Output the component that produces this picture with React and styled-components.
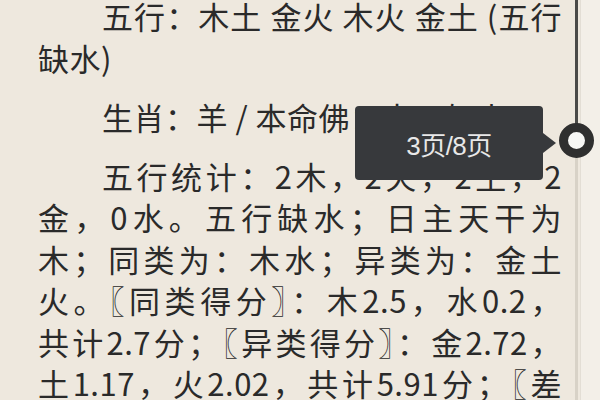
import React from "react";
import styled, { createGlobalStyle } from "styled-components";

const GlobalStyle = createGlobalStyle`
  html, body {
    margin: 0;
    padding: 0;
    background: #eee8de;
    overflow: hidden;
  }
`;

const Page = styled.div`
  position: relative;
  width: 600px;
  height: 400px;
  overflow: hidden;
  display: flex;
  background: #eee8de;
  font-family: "Noto Sans CJK SC", "Noto Sans", sans-serif;
`;

const TextColumn = styled.div`
  flex: none;
  width: 524px;
  padding-left: 38px;
  margin-top: -5px;
  color: #2a2a2a;
  font-size: 31px;
  letter-spacing: 0.5px;
  line-height: 41.5px;
`;

const Paragraph = styled.div`
  margin-bottom: 17.5px;
`;

const Line = styled.div`
  padding-left: ${(p) => (p.$indent ? "64px" : "0")};
  text-align: ${(p) => (p.$full ? "justify" : "left")};
  text-align-last: ${(p) => (p.$full ? "justify" : "left")};
`;

const Rail = styled.div`
  flex: 1;
  display: flex;
  padding-left: 13px;
`;

const RailLine = styled.div`
  flex: none;
  width: 3px;
  background: linear-gradient(
    to bottom,
    #4a4a48 0,
    #4a4a48 141px,
    #d8d2c7 141px,
    #d8d2c7 100%
  );
`;

const RailStrip = styled.div`
  flex: 1;
  margin-left: 2px;
  background: #f3efe8;
  border-left: 1px solid #e3ded5;
`;

const Knob = styled.div`
  position: absolute;
  left: 559px;
  top: 123px;
  width: 17px;
  height: 17px;
  border-radius: 50%;
  background: #f7f7f5;
  border: 9.5px solid #2f2f2f;
`;

const Tooltip = styled.div`
  position: absolute;
  left: 355px;
  top: 106px;
  width: 188px;
  height: 74px;
  border-radius: 4px;
  background: #37393c;
  color: #e8e8e8;
  display: flex;
  align-items: center;
  justify-content: center;
  font-family: "Liberation Sans", "Noto Sans CJK SC", sans-serif;
  font-size: 26px;
  letter-spacing: -0.5px;

  &::after {
    content: "";
    position: absolute;
    right: -13px;
    top: 27px;
    border-left: 13px solid #37393c;
    border-top: 10px solid transparent;
    border-bottom: 10px solid transparent;
  }
`;

const TooltipText = styled.span`
  font-family: "Liberation Sans", "Noto Sans CJK SC", sans-serif;
`;

export default function App() {
  return (
    <>
      <GlobalStyle />
      <Page>
        <TextColumn>
          <Paragraph>
            <Line $indent $full>五行：木土 金火 木火 金土 (五行</Line>
            <Line>缺水)</Line>
          </Paragraph>
          <Paragraph>
            <Line $indent>生肖：羊 / 本命佛：大日如来</Line>
          </Paragraph>
          <Paragraph>
            <Line $indent $full>五行统计：2木，2火，2土，2</Line>
            <Line $full>金，0水。五行缺水；日主天干为</Line>
            <Line $full>木；同类为：木水；异类为：金土</Line>
            <Line $full>火。〖同类得分〗：木2.5，水0.2，</Line>
            <Line $full>共计2.7分；〖异类得分〗：金2.72，</Line>
            <Line $full>土1.17，火2.02，共计5.91分；〖差</Line>
            <Line>异得分〗</Line>
          </Paragraph>
        </TextColumn>
        <Rail>
          <RailLine />
          <RailStrip />
        </Rail>
        <Tooltip>
          <TooltipText>3页/8页</TooltipText>
        </Tooltip>
        <Knob />
      </Page>
    </>
  );
}
